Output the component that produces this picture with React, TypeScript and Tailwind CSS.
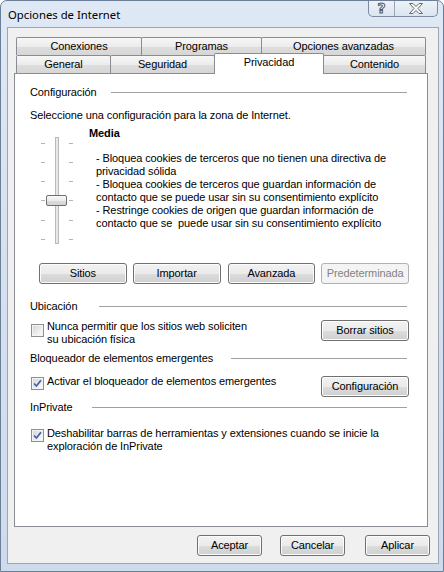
import React from 'react';

const btn =
  'h-[21px] rounded-[3px] border border-[#707070] bg-[linear-gradient(180deg,#f2f2f2_0%,#ebebeb_50%,#dddddd_51%,#cfcfcf_100%)] shadow-[inset_0_0_0_1px_#fcfcfc] text-black text-[11px] leading-none flex items-center justify-center';

const btnOff =
  'h-[21px] rounded-[3px] border border-[#adb2b5] bg-[#f4f4f4] text-[#838383] text-[11px] leading-none flex items-center justify-center';

const tab =
  'h-[18px] border border-b-0 border-[#898c95] rounded-t-[2px] bg-[linear-gradient(180deg,#f7f7f7_0%,#ececec_50%,#dedede_51%,#d6d6d6_100%)] flex items-center justify-center text-[11px] leading-none';

function Check({ on }: { on?: boolean }) {
  return (
    <div className="w-[13px] h-[13px] shrink-0 border border-[#8e8f8f] bg-[linear-gradient(135deg,#d4d4d4_0%,#f2f2f2_70%,#ffffff_100%)] shadow-[inset_0_0_0_1px_#f4f4f4] flex items-center justify-center">
      {on && (
        <svg width="9" height="9" viewBox="0 0 9 9">
          <path d="M1 4.5 L3.4 7 L8 1.2" fill="none" stroke="#4763a8" strokeWidth="1.8" />
        </svg>
      )}
    </div>
  );
}

function GroupHead({ label, gap }: { label: string; gap: string }) {
  return (
    <div className="flex items-center h-[13px]">
      <span className="whitespace-nowrap">{label}</span>
      <div className={`flex-1 h-px bg-[#a0a0a0] mr-[2px] ${gap}`} />
    </div>
  );
}

function Slider() {
  const ticks = [6, 25, 44, 63, 83, 102];
  return (
    <svg width="33" height="107" viewBox="0 0 33 107" className="shrink-0">
      {ticks.map((y) => (
        <g key={y}>
          <rect x="0" y={y} width="4" height="1" fill="#b4b4b4" />
          <rect x="28" y={y} width="4" height="1" fill="#b4b4b4" />
        </g>
      ))}
      <rect x="14.5" y="0.5" width="3" height="106" fill="#e7e7e7" stroke="#b9b9b9" />
      <defs>
        <linearGradient id="th" x1="0" y1="0" x2="0" y2="1">
          <stop offset="0" stopColor="#fafafa" />
          <stop offset="0.5" stopColor="#ececec" />
          <stop offset="0.55" stopColor="#dcdcdc" />
          <stop offset="1" stopColor="#d2d2d2" />
        </linearGradient>
      </defs>
      <rect x="5.5" y="58.5" width="20" height="10" rx="1.5" fill="url(#th)" stroke="#6f6f6f" />
    </svg>
  );
}

export default function App() {
  return (
    <div className="w-[444px] h-[572px] overflow-hidden rounded-t-[7px] border border-[#6d7f96] bg-[linear-gradient(180deg,#dfe9f5_0%,#d6e2f0_40%,#cddbec_100%)] font-['Liberation_Sans',Arial,sans-serif] text-[11px] leading-[13px] tracking-[-0.1px] text-black">
      {/* title bar */}
      <div className="flex items-start justify-between h-[26px]">
        <div className="h-[26px] pl-[7px] flex items-center font-['Noto_Sans',sans-serif] text-[11.3px] tracking-normal text-black">
          Opciones de Internet
        </div>
        <div className="-mt-px mr-[5px] flex h-[17px] border border-t-0 border-[#7d8ba0] rounded-b-[5px] bg-[linear-gradient(180deg,#eef3f9,#dbe5f1)] overflow-hidden">
          <div className="w-[26px] flex items-center justify-center border-r border-[#9aa7b8] text-[14px] font-bold text-transparent [-webkit-text-stroke:1px_#5a5a5a] font-['DejaVu_Sans',sans-serif] leading-none">
            ?
          </div>
          <div className="w-[42px] flex items-center justify-center">
            <svg width="14" height="11" viewBox="0 0 14 11">
              <path
                d="M0.5 0.5 H4 L7 3.5 L10 0.5 H13.5 L9 5.5 L13.5 10.5 H10 L7 7.5 L4 10.5 H0.5 L5 5.5 Z"
                fill="#f5f5f5"
                stroke="#6a6a6a"
              />
            </svg>
          </div>
        </div>
      </div>

      {/* client */}
      <div className="ml-[6px] w-[432px] h-[537px] border border-[#9aa6b6] bg-[#f0f0f0] pt-[9px] pl-[6px]">
        {/* tabs */}
        <div className="w-[414px]">
          <div className="flex pl-[2px]">
            <div className={`${tab} w-[126px]`}>Conexiones</div>
            <div className={`${tab} w-[121px] -ml-px`}>Programas</div>
            <div className={`${tab} w-[165px] -ml-px`}>Opciones avanzadas</div>
          </div>
          <div className="flex items-end h-[18px] pl-[2px]">
            <div className={`${tab} w-[95px]`}>General</div>
            <div className={`${tab} w-[105px] -ml-px`}>Seguridad</div>
            <div className="relative top-px z-10 -ml-px w-[110px] h-[21px] border border-b-0 border-[#898c95] rounded-t-[2px] bg-white flex justify-center pt-[2px] text-[11px] leading-[13px]">
              Privacidad
            </div>
            <div className={`${tab} w-[103px] -ml-px`}>Contenido</div>
          </div>

          {/* panel */}
          <div className="w-[414px] h-[454px] border border-[#898c95] bg-white pl-[15px] pr-[18px]">
            <div className="mt-[12px]">
              <GroupHead label="Configuración" gap="ml-[14px]" />
            </div>
            <div className="mt-[10px]">Seleccione una configuración para la zona de Internet.</div>

            <div className="mt-[5px] flex items-start">
              <div className="ml-[11px] mt-[10px]">
                <Slider />
              </div>
              <div className="ml-[15px]">
                <div className="font-bold">Media</div>
                <div className="mt-[12px] ml-[7px]">
                  <div>- Bloquea cookies de terceros que no tienen una directiva de</div>
                  <div>privacidad sólida</div>
                  <div>- Bloquea cookies de terceros que guardan información de</div>
                  <div>contacto que se puede usar sin su consentimiento explícito</div>
                  <div>- Restringe cookies de origen que guardan información de</div>
                  <div>contacto que se&nbsp; puede usar sin su consentimiento explícito</div>
                </div>
              </div>
            </div>

            <div className="mt-[19px] ml-[9px] flex gap-[6px]">
              <div className={`${btn} w-[88px]`}>Sitios</div>
              <div className={`${btn} w-[88px]`}>Importar</div>
              <div className={`${btn} w-[88px] ml-px`}>Avanzada</div>
              <div className={`${btnOff} w-[88px]`}>Predeterminada</div>
            </div>

            <div className="mt-[16px]">
              <GroupHead label="Ubicación" gap="ml-[22px]" />
            </div>
            <div className="mt-[7px] flex items-start">
              <div className="ml-px mt-[4px]">
                <Check />
              </div>
              <div className="ml-[3px]">
                <div>Nunca permitir que los sitios web soliciten</div>
                <div>su ubicación física</div>
              </div>
              <div className={`${btn} w-[88px] ml-auto`}>Borrar sitios</div>
            </div>

            <div className="mt-[6px]">
              <GroupHead label="Bloqueador de elementos emergentes" gap="ml-[18px]" />
            </div>
            <div className="mt-[10px] flex items-start">
              <div className="ml-px mt-[2px]">
                <Check on />
              </div>
              <div className="ml-[3px]">Activar el bloqueador de elementos emergentes</div>
              <div className={`${btn} w-[88px] ml-auto mt-px`}>Configuración</div>
            </div>

            <div className="mt-[4px]">
              <GroupHead label="InPrivate" gap="ml-[19px]" />
            </div>
            <div className="mt-[13px] flex items-start">
              <div className="ml-px mt-[2px]">
                <Check on />
              </div>
              <div className="ml-[3px]">
                <div>Deshabilitar barras de herramientas y extensiones cuando se inicie la</div>
                <div>exploración de InPrivate</div>
              </div>
            </div>
          </div>
        </div>

        {/* dialog buttons */}
        <div className="mt-[8px] flex pl-[183px]">
          <div className={`${btn} w-[65px]`}>Aceptar</div>
          <div className={`${btn} w-[65px] ml-[18px]`}>Cancelar</div>
          <div className={`${btn} w-[65px] ml-[20px]`}>Aplicar</div>
        </div>
      </div>
    </div>
  );
}
